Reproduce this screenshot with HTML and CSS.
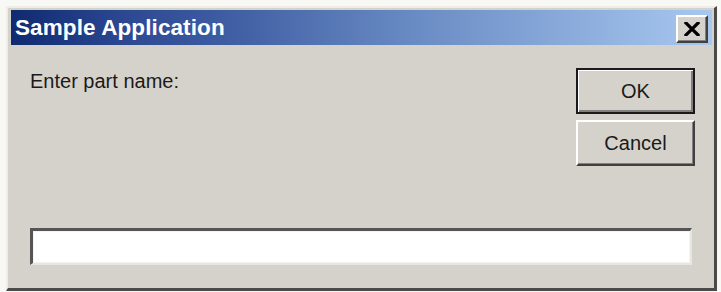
FILE: index.html
```html
<!DOCTYPE html>
<html>
<head>
<meta charset="utf-8">
<link rel="stylesheet" href="styles.css">
</head>
<body>
<div class="window">
  <div class="titlebar">
    <span class="title">Sample Application</span>
    <button class="close" type="button" aria-label="Close">
      <svg width="16" height="14" viewBox="0 0 16 14"><path d="M2 1 L14 13 M14 1 L2 13" stroke="#000" stroke-width="3.2" stroke-linecap="square"/></svg>
    </button>
  </div>
  <div class="content">
    <div class="toprow">
      <div class="label">Enter part name:</div>
      <div class="buttons">
        <button class="btn default" type="button">OK</button>
        <button class="btn" type="button">Cancel</button>
      </div>
    </div>
    <div class="field"></div>
  </div>
</div>
</body>
</html>
```
FILE: styles.css
```css
html, body {
  margin: 0;
  background: #f8f8f5;
}
body {
  padding: 6px 4px 1px 6px;
  font-family: "Liberation Sans", Arial, sans-serif;
}
.window {
  box-sizing: border-box;
  width: 711px;
  height: 285px;
  background: #d5d2cc;
  border-left: 2px solid #eeede8;
  border-top: 2px solid #eeede8;
  border-right: 3px solid #4a4a4a;
  border-bottom: 3px solid #4a4a4a;
  padding: 2px 2px 0 3px;
  display: flex;
  flex-direction: column;
}
.titlebar {
  height: 35px;
  background: linear-gradient(to right, #0f2a70 0%, #2a4690 15%, #3d5ca2 30%, #6a8cc4 58%, #a8c8f0 100%);
  display: flex;
  align-items: center;
  justify-content: space-between;
  padding: 0 4px 0 4px;
}
.title {
  color: #fff;
  font-weight: bold;
  font-size: 22.5px;
  line-height: 35px;
  letter-spacing: 0.1px;
}
.close {
  box-sizing: border-box;
  width: 32px;
  height: 28px;
  margin-top: 2px;
  padding: 0;
  background: #d5d2cc;
  border-top: 2px solid #ffffff;
  border-left: 2px solid #ffffff;
  border-right: 2px solid #404040;
  border-bottom: 2px solid #404040;
  box-shadow: inset -1px -1px 0 #808080;
  display: flex;
  align-items: center;
  justify-content: center;
}
.content {
  flex: 1;
  display: flex;
  flex-direction: column;
  justify-content: space-between;
  padding: 23px 17px 23px 19px;
}
.toprow {
  display: flex;
  justify-content: space-between;
  align-items: flex-start;
}
.label {
  font-size: 20px;
  line-height: 22px;
  color: #1a1a1a;
  padding-top: 2px;
}
.buttons {
  display: flex;
  flex-direction: column;
  gap: 6px;
}
.btn {
  box-sizing: border-box;
  width: 119px;
  height: 46px;
  padding: 0;
  font-family: "Liberation Sans", Arial, sans-serif;
  font-size: 20px;
  color: #1a1a1a;
  background: #d5d2cc;
  border-top: 2px solid #ffffff;
  border-left: 2px solid #ffffff;
  border-right: 2px solid #404040;
  border-bottom: 2px solid #404040;
  box-shadow: inset -1px -1px 0 #808080;
}
.btn.default {
  border: 2px solid #1a1a1a;
  box-shadow: inset 1px 1px 0 #ffffff, inset -2px -2px 0 #808080;
}
.field {
  box-sizing: border-box;
  height: 37px;
  margin-right: 3px;
  background: #ffffff;
  border-top: 3px solid #555555;
  border-left: 3px solid #555555;
  border-right: 2px solid #e8e6e0;
  border-bottom: 2px solid #e8e6e0;
  box-shadow: inset 0 0 0 1px #f4f4f4;
}
```
